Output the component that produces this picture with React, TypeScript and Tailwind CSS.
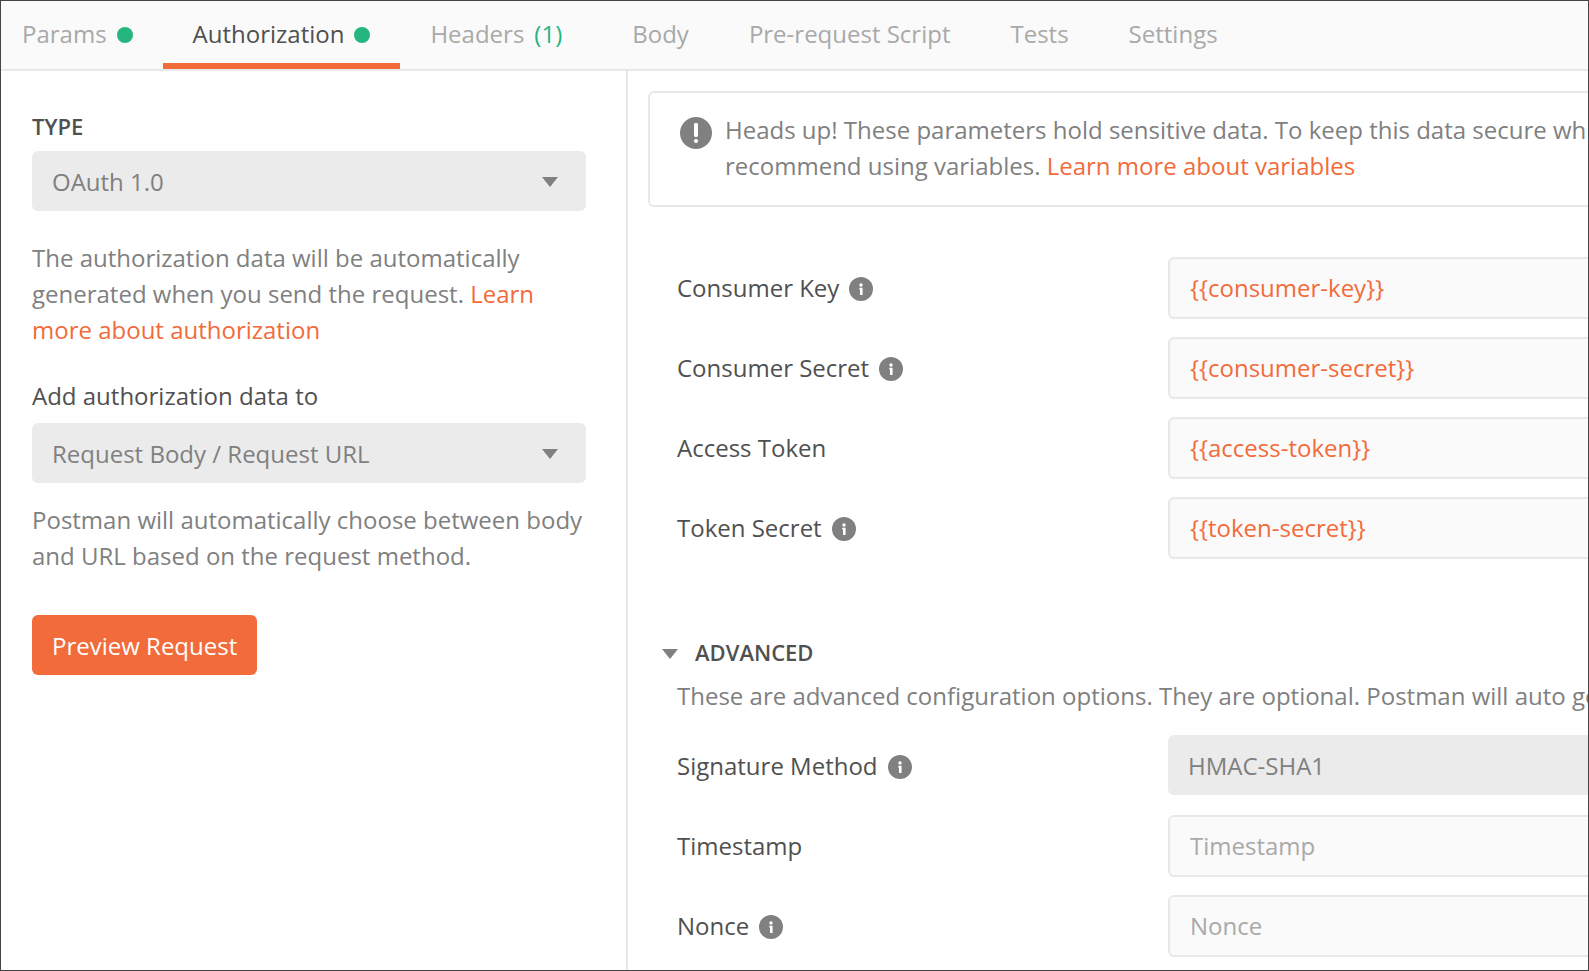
import React, { useState } from "react";

interface Tab {
  name: string;
  dot?: boolean;
  count?: number;
}

interface Field {
  id: string;
  label: string;
  info?: boolean;
}

const tabs: Tab[] = [
  { name: "Params", dot: true },
  { name: "Authorization", dot: true },
  { name: "Headers", count: 1 },
  { name: "Body" },
  { name: "Pre-request Script" },
  { name: "Tests" },
  { name: "Settings" },
];

const credentialFields: Field[] = [
  { id: "consumer-key", label: "Consumer Key", info: true },
  { id: "consumer-secret", label: "Consumer Secret", info: true },
  { id: "access-token", label: "Access Token" },
  { id: "token-secret", label: "Token Secret", info: true },
];

const signatureField: Field = {
  id: "signature-method",
  label: "Signature Method",
  info: true,
};

const advancedFields: Field[] = [
  { id: "timestamp", label: "Timestamp" },
  { id: "nonce", label: "Nonce", info: true },
];

const CaretIcon: React.FC<{ className?: string }> = ({ className = "" }) => (
  <svg
    viewBox="0 0 16 10"
    className={`w-4 h-[10px] fill-[#808080] ${className}`}
    aria-hidden="true"
  >
    <path d="M0 0H16L8 10Z" />
  </svg>
);

const InfoIcon: React.FC = () => (
  <svg
    viewBox="0 0 24 24"
    className="w-6 h-6 mt-[2px] shrink-0"
    aria-hidden="true"
  >
    <circle cx="12" cy="12" r="12" fill="#808080" />
    <circle cx="12" cy="8" r="1.7" fill="#fff" />
    <path d="M10.3 10.8H13.6V18H11V12.4H10.3Z" fill="#fff" />
  </svg>
);

const AlertIcon: React.FC = () => (
  <svg
    viewBox="0 0 32 32"
    className="w-8 h-8 mt-[5px] shrink-0"
    aria-hidden="true"
  >
    <circle cx="16" cy="16" r="16" fill="#808080" />
    <rect x="14" y="6" width="4" height="14" rx="1.4" fill="#fff" />
    <circle cx="16" cy="24" r="2.1" fill="#fff" />
  </svg>
);

const SelectBox: React.FC<{ id: string; options: string[] }> = ({
  id,
  options,
}) => (
  <div className="relative">
    <select
      id={id}
      className="block w-full h-[60px] pt-[2px] pl-5 pr-12 appearance-none rounded-md bg-[#ebebeb] text-[#808080]"
    >
      {options.map((option) => (
        <option key={option}>{option}</option>
      ))}
    </select>
    <CaretIcon className="absolute right-7 top-[26px] pointer-events-none" />
  </div>
);

const FieldLabel: React.FC<{ field: Field }> = ({ field }) => (
  <div className="flex items-center gap-[10px] w-[491px] h-[62px] shrink-0">
    <label htmlFor={field.id}>{field.label}</label>
    {field.info && <InfoIcon />}
  </div>
);

const inputClass =
  "flex-1 min-w-0 h-[62px] pb-[2px] px-5 border-2 border-r-0 border-[#e8e8e8] rounded-l-md bg-[#fafafa] placeholder:text-[#a9a9a9]";

const App: React.FC = () => {
  const [activeTab, setActiveTab] = useState("Authorization");
  const [advancedOpen, setAdvancedOpen] = useState(true);
  const [values, setValues] = useState<Record<string, string>>({
    "consumer-key": "{{consumer-key}}",
    "consumer-secret": "{{consumer-secret}}",
    "access-token": "{{access-token}}",
    "token-secret": "{{token-secret}}",
    timestamp: "",
    nonce: "",
  });

  const handleChange = (id: string, value: string) => {
    setValues((prev) => ({ ...prev, [id]: value }));
  };

  return (
    <div className="flex flex-col h-screen overflow-hidden border border-[#444444] bg-white font-['Open_Sans',sans-serif] text-[24px] leading-[36px] text-[#505050]">
      {/* Request tabs */}
      <nav className="flex h-[70px] shrink-0 pr-5 border-b-2 border-[#e8e8e8] bg-[#fafafa]">
        {tabs.map((tab) => (
          <button
            key={tab.name}
            onClick={() => setActiveTab(tab.name)}
            className={`flex items-center gap-[10px] px-[30px] pt-1 first:pl-[21px] border-b-[6px] whitespace-nowrap ${
              activeTab === tab.name
                ? "border-[#f26b3a] text-[#505050]"
                : "border-transparent text-[#a9a9a9]"
            }`}
          >
            {tab.name}
            {tab.dot && (
              <span className="w-4 h-4 mt-[2px] rounded-full bg-[#26b47f]" />
            )}
            {tab.count && (
              <span className="mr-[10px] text-[#26b47f]">({tab.count})</span>
            )}
          </button>
        ))}
      </nav>

      <div className="flex flex-1 min-h-0">
        {/* Authorization type */}
        <aside className="w-[627px] shrink-0 pt-[39px] pl-[31px] pr-10 border-r-2 border-[#e8e8e8]">
          <label
            htmlFor="auth-type"
            className="block mb-[9px] text-[22px] leading-[32px] font-semibold"
          >
            TYPE
          </label>
          <SelectBox id="auth-type" options={["OAuth 1.0"]} />
          <p className="mt-[29px] text-[#808080]">
            The authorization data will be automatically generated when you send
            the request.{" "}
            <a href="#authorization" className="text-[#f26b3a]">
              Learn more about authorization
            </a>
          </p>

          <label htmlFor="add-to" className="block mt-[30px] mb-[9px]">
            Add authorization data to
          </label>
          <SelectBox id="add-to" options={["Request Body / Request URL"]} />
          <p className="mt-[19px] text-[#808080]">
            Postman will automatically choose between body and URL based on the
            request method.
          </p>

          <button className="h-[60px] mt-[41px] pt-[2px] px-5 rounded-md bg-[#f26b3a] text-white">
            Preview Request
          </button>
        </aside>

        {/* Parameters */}
        <main className="flex-1 min-w-0 overflow-hidden pt-5 pl-5">
          <div className="flex gap-[13px] h-[116px] pt-[19px] pl-[30px] border-2 border-r-0 border-[#e8e8e8] rounded-l-md text-[#808080] whitespace-nowrap overflow-hidden">
            <AlertIcon />
            <p>
              Heads up! These parameters hold sensitive data. To keep this data
              secure wh
              <br />
              recommend using variables.{" "}
              <a href="#variables" className="text-[#f26b3a]">
                Learn more about variables
              </a>
            </p>
          </div>

          <div className="flex flex-col gap-[18px] mt-[50px] pl-[29px]">
            {credentialFields.map((field) => (
              <div key={field.id} className="flex">
                <FieldLabel field={field} />
                <input
                  id={field.id}
                  type="text"
                  value={values[field.id]}
                  onChange={(e) => handleChange(field.id, e.target.value)}
                  className={`${inputClass} text-[#f26b3a]`}
                />
              </div>
            ))}
          </div>

          <button
            onClick={() => setAdvancedOpen(!advancedOpen)}
            aria-expanded={advancedOpen}
            className="flex items-center gap-[17px] mt-[77px] ml-[14px] text-[22px] leading-[32px] font-semibold"
          >
            <CaretIcon className="mt-1" />
            ADVANCED
          </button>

          {advancedOpen && (
            <div className="mt-[10px] pl-[29px]">
              <p className="text-[#808080] whitespace-nowrap">
                These are advanced configuration options. They are optional.
                Postman will auto generate
              </p>
              <div className="flex flex-col gap-[18px] mt-[21px]">
                <div className="flex">
                  <FieldLabel field={signatureField} />
                  <select
                    id={signatureField.id}
                    className="flex-1 min-w-0 h-[60px] pt-[2px] px-5 appearance-none rounded-l-md bg-[#ebebeb] text-[#808080]"
                  >
                    <option>HMAC-SHA1</option>
                  </select>
                </div>
                {advancedFields.map((field) => (
                  <div key={field.id} className="flex">
                    <FieldLabel field={field} />
                    <input
                      id={field.id}
                      type="text"
                      placeholder={field.label}
                      value={values[field.id]}
                      onChange={(e) => handleChange(field.id, e.target.value)}
                      className={inputClass}
                    />
                  </div>
                ))}
              </div>
            </div>
          )}
        </main>
      </div>
    </div>
  );
};

export default App;
